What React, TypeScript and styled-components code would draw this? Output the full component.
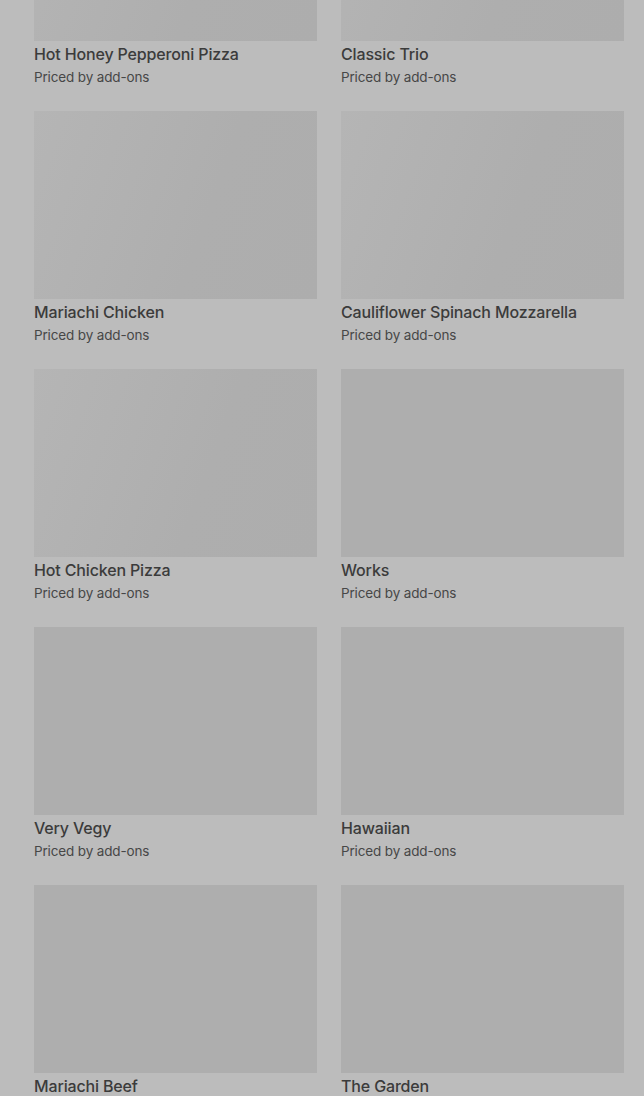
import styled, { createGlobalStyle } from 'styled-components';

const ITEMS: { name: string; shimmer: boolean }[] = [
  { name: 'Hot Honey Pepperoni Pizza',     shimmer: true },
  { name: 'Classic Trio',                  shimmer: true },
  { name: 'Mariachi Chicken',              shimmer: true },
  { name: 'Cauliflower Spinach Mozzarella', shimmer: true },
  { name: 'Hot Chicken Pizza',             shimmer: true },
  { name: 'Works',                         shimmer: false },
  { name: 'Very Vegy',                     shimmer: false },
  { name: 'Hawaiian',                      shimmer: false },
  { name: 'Mariachi Beef',                 shimmer: false },
  { name: 'The Garden',                    shimmer: false },
];

const GlobalStyle = createGlobalStyle`
  html, body {
    margin: 0;
    padding: 0;
    height: 1096px;
    overflow: hidden;
    background: #bcbcbc;
  }
  body {
    font-family: Inter, Roboto, "Liberation Sans", sans-serif;
    -webkit-font-smoothing: antialiased;
  }
`;

const Page = styled.div`
  padding: 0 20px 0 34px;
  margin-top: -147px;
`;

const Grid = styled.div`
  display: grid;
  grid-template-columns: repeat(2, 283px);
  column-gap: 24px;
  row-gap: 24px;
`;

const Card = styled.div`
  display: flex;
  flex-direction: column;
`;

const Thumb = styled.div<{ shimmer: boolean }>`
  height: 188px;
  background: ${({ shimmer }) =>
    shimmer
      ? 'linear-gradient(110deg, #b5b5b5 0%, #b1b1b1 35%, #aeaeae 60%, #adadad 100%)'
      : '#aeaeae'};
`;

const Title = styled.div`
  margin-top: 3px;
  font-size: 16px;
  line-height: 20px;
  font-weight: 500;
  letter-spacing: -0.15px;
  color: #3b3b3b;
`;

const Sub = styled.div`
  margin-top: 3px;
  font-size: 13.5px;
  line-height: 20px;
  letter-spacing: -0.15px;
  color: #474747;
`;

export default function App() {
  return (
    <>
      <GlobalStyle />
      <Page>
        <Grid>
          {ITEMS.map((item) => (
            <Card key={item.name}>
              <Thumb shimmer={item.shimmer} />
              <Title>{item.name}</Title>
              <Sub>Priced by add-ons</Sub>
            </Card>
          ))}
        </Grid>
      </Page>
    </>
  );
}
